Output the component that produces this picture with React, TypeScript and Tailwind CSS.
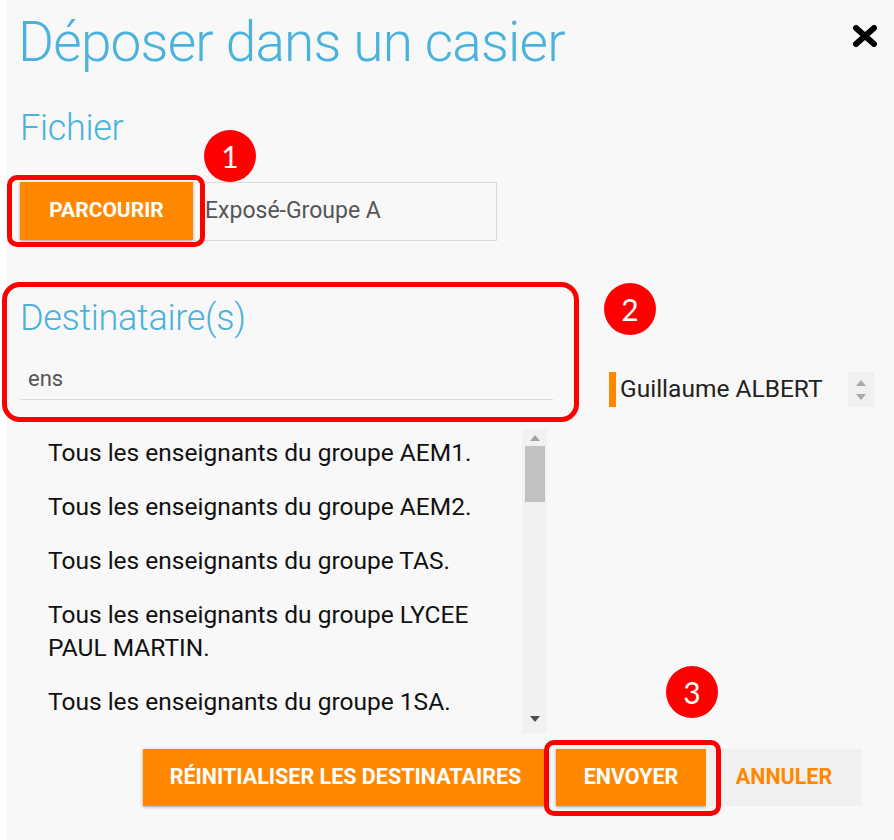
import React from "react";

const LIST_ITEMS = [
  "Tous les enseignants du groupe AEM1.",
  "Tous les enseignants du groupe AEM2.",
  "Tous les enseignants du groupe TAS.",
  "Tous les enseignants du groupe LYCEE PAUL MARTIN.",
  "Tous les enseignants du groupe 1SA.",
];

function Badge({ n, className }: { n: string; className: string }) {
  return (
    <span
      className={`absolute w-[52px] h-[52px] rounded-full bg-[#ff0000] text-white flex items-center justify-center text-[30px] leading-none font-['Lato',sans-serif] ${className}`}
    >
      {n}
    </span>
  );
}

export default function App() {
  return (
    <div className="relative flex w-[894px] h-[840px] bg-white font-['Roboto',sans-serif]">
      <div className="ml-[7px] flex-1 bg-[#f8f8f8] flex flex-col">
        {/* Header */}
        <div className="flex items-start justify-between pl-[11px] pr-[16px] pt-[15px]">
          <h1 className="text-[55px] leading-none font-light text-[#4ab2dc] tracking-[-0.8px]">
            Déposer dans un casier
          </h1>
          <button className="mt-[10px] w-[26px] h-[22px]" aria-label="Fermer">
            <svg viewBox="0 0 26 22" className="w-[26px] h-[22px]">
              <path d="M4 3L22 19M22 3L4 19" stroke="#000" strokeWidth={6} strokeLinecap="round" />
            </svg>
          </button>
        </div>

        {/* Fichier */}
        <h2 className="mt-[40px] pl-[13px] text-[36px] leading-none font-light text-[#4ab2dc] tracking-[-0.3px]">
          Fichier
        </h2>
        <div className="mt-[36px] ml-[13px] flex h-[59px]">
          <button className="w-[173px] h-[58px] bg-[#ff8800] text-white text-[21px] font-bold uppercase shadow-[0_1px_3px_rgba(0,0,0,0.35)]">
            Parcourir
          </button>
          <div className="w-[304px] h-[59px] border border-[#dcdcdc] flex items-center pl-[11px] text-[23px] text-[#555]">
            Exposé-Groupe A
          </div>
        </div>

        {/* Destinataires */}
        <div className="flex mt-[59px]">
          <div className="w-[547px] flex flex-col">
            <h2 className="pl-[13px] text-[36px] leading-none font-light text-[#4ab2dc] tracking-[-0.3px]">
              Destinataire(s)
            </h2>
            <div className="mt-[31px] ml-[13px] w-[533px] border-b border-[#dcdcdc] pb-[8px] pl-[8px] text-[22px] leading-[24px] text-[#555]">
              ens
            </div>
            <div className="mt-[29px] w-[540px] flex h-[304px]">
              <div className="flex-1 flex flex-col gap-[21px] pt-[7px] pl-[41px] pr-[4px] overflow-hidden">
                {LIST_ITEMS.map((item) => (
                  <div key={item} className="text-[24.5px] leading-[33px] text-[#111]">
                    {item}
                  </div>
                ))}
              </div>
              <div className="w-[25px] bg-[#f1f1f1] flex flex-col items-center">
                <svg viewBox="0 0 10 6" className="w-[10px] h-[6px] mt-[6px]">
                  <path d="M0 6L5 0L10 6Z" fill="#a3a3a3" />
                </svg>
                <div className="mt-[5px] w-[20px] h-[56px] bg-[#c1c1c1]" />
                <div className="flex-1" />
                <svg viewBox="0 0 10 6" className="w-[10px] h-[6px] mb-[11px]">
                  <path d="M0 0L10 0L5 6Z" fill="#505050" />
                </svg>
              </div>
            </div>
          </div>

          <div className="ml-[55px] mt-[72px] flex items-start">
            <div className="flex items-center h-[35px]">
              <span className="w-[7px] h-[35px] bg-[#ff8800]" />
              <span className="ml-[4px] text-[24.5px] text-[#222]">Guillaume ALBERT</span>
            </div>
            <div className="ml-[25px] w-[26px] h-[35px] bg-[#f0f0f0] flex flex-col items-center justify-center gap-[8px]">
              <svg viewBox="0 0 10 6" className="w-[10px] h-[6px]">
                <path d="M0 6L5 0L10 6Z" fill="#a8a8a8" />
              </svg>
              <svg viewBox="0 0 10 6" className="w-[10px] h-[6px]">
                <path d="M0 0L10 0L5 6Z" fill="#a8a8a8" />
              </svg>
            </div>
          </div>
        </div>

        {/* Actions */}
        <div className="mt-[16px] ml-[136px] flex h-[57px]">
          <button className="w-[405px] bg-[#ff8800] text-white text-[21.5px] font-bold uppercase shadow-[0_1px_3px_rgba(0,0,0,0.35)]">
            Réinitialiser les destinataires
          </button>
          <button className="ml-[8px] w-[150px] bg-[#ff8800] text-white text-[21.5px] font-bold uppercase shadow-[0_1px_3px_rgba(0,0,0,0.35)]">
            Envoyer
          </button>
          <button className="w-[156px] bg-[#f0f0f0] text-[#ff8800] text-[21.5px] font-bold uppercase">
            Annuler
          </button>
        </div>
      </div>

      {/* Annotations */}
      <div className="absolute left-[7px] top-[175px] w-[198px] h-[72px] border-[5px] border-[#ff0000] rounded-[10px]" />
      <div className="absolute left-[2px] top-[282px] w-[577px] h-[140px] border-[5px] border-[#ff0000] rounded-[18px]" />
      <div className="absolute left-[544px] top-[740px] w-[177px] h-[76px] border-[5px] border-[#ff0000] rounded-[10px]" />
      <Badge n="1" className="left-[204px] top-[130px]" />
      <Badge n="2" className="left-[604px] top-[283px]" />
      <Badge n="3" className="left-[666px] top-[666px]" />
    </div>
  );
}
